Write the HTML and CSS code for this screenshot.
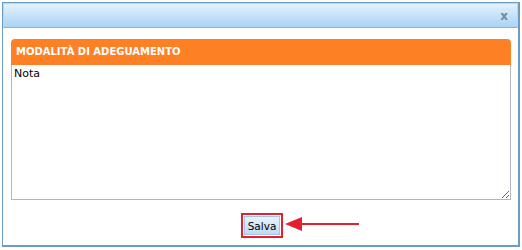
FILE: index.html
```html
<!DOCTYPE html>
<html lang="it">
<head>
  <meta charset="UTF-8">
  <title>Modalità di adeguamento</title>
  <link rel="stylesheet" href="styles.css">
</head>
<body>

<div class="dialog">
  <div class="titlebar">
    <span class="close">x</span>
  </div>

  <div class="content">
    <div class="panel-head">MODALITÀ DI ADEGUAMENTO</div>
    <textarea class="note">Nota</textarea>

    <div class="actions">
      <span class="highlight-box">
        <button class="btn">Salva</button>
      </span>
      <svg class="arrow" width="76" height="16" viewBox="0 0 76 16">
        <polygon points="0,8 17,1 17,15" fill="#e3202e"/>
        <rect x="16" y="7" width="58" height="2" fill="#e3202e"/>
      </svg>
    </div>
  </div>
</div>

</body>
</html>
```

FILE: styles.css
```css
body {
  margin: 0;
  background: #ffffff;
  font-family: Tahoma, "DejaVu Sans", sans-serif;
}

.dialog {
  margin: 2px;
  width: 518px;
  height: 245px;
  box-sizing: border-box;
  border: 1px solid #6d9cc2;
  border-right-width: 2px;
  border-bottom-width: 2px;
  background: #fff;
}

.titlebar {
  height: 23px;
  border: 1px solid #b9d7ef;
  border-bottom: 1px solid #8fb3d1;
  background: linear-gradient(#e4f1fd, #a9d3f5);
  display: flex;
  align-items: center;
  justify-content: flex-end;
  padding-right: 9px;
}

.close {
  color: #6a8aa6;
  font-family: "DejaVu Sans", sans-serif;
  font-weight: bold;
  font-size: 12px;
  line-height: 12px;
}

.content {
  padding: 11px 7px 0 8px;
}

.panel-head {
  height: 26px;
  line-height: 26px;
  background: #fe8024;
  border-radius: 4px 4px 0 0;
  color: #fff;
  font-family: "DejaVu Sans", sans-serif;
  font-weight: bold;
  font-size: 10px;
  padding-left: 5px;
}

.note {
  display: block;
  width: 100%;
  height: 135px;
  box-sizing: border-box;
  margin: 0;
  border: 1px solid #b4b6bf;
  border-top: 0;
  padding: 2px 2px;
  font-family: "DejaVu Sans", sans-serif;
  font-size: 11px;
  color: #000;
  resize: both;
}

.actions {
  position: relative;
  display: flex;
  justify-content: center;
  padding-top: 13px;
}

.highlight-box {
  display: inline-block;
  border: 2px solid #e3202e;
  padding: 1px;
  margin-left: 2px;
}

.btn {
  display: block;
  width: 36px;
  height: 19px;
  padding: 0;
  border: 1px solid #a4c4df;
  background: linear-gradient(#e9f3fc, #bcdbf5);
  font-family: "DejaVu Sans", sans-serif;
  font-size: 10.5px;
  color: #000;
}

.arrow {
  position: absolute;
  left: 274px;
  top: 16px;
}
```
